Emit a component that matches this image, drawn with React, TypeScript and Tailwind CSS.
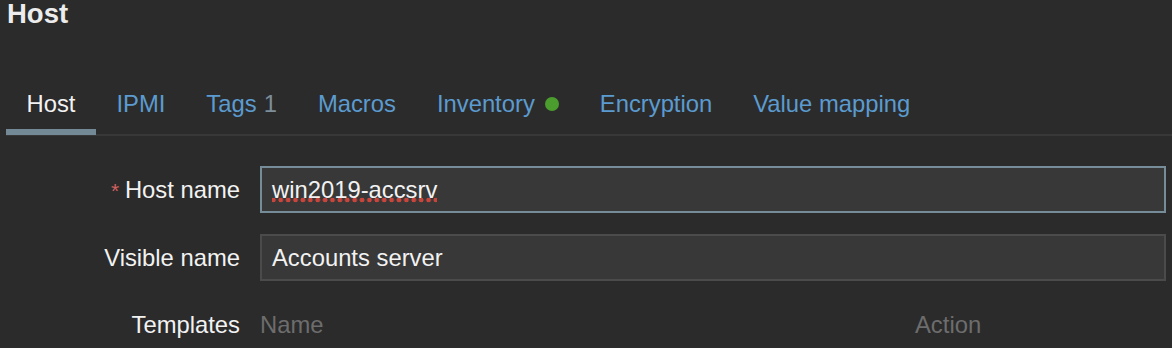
import React from "react";

const font = { fontFamily: '"Liberation Sans", Arial, Helvetica, sans-serif' };

const tabs = [
  { label: "Host", active: true },
  { label: "IPMI" },
  { label: "Tags", count: "1" },
  { label: "Macros" },
  { label: "Inventory", dot: true },
  { label: "Encryption" },
  { label: "Value mapping" },
];

function Field({ label, required, focused, value, spell }: { label: string; required?: boolean; focused?: boolean; value: string; spell?: boolean }) {
  return (
    <div className="flex items-center gap-[20px]">
      <div className="w-[240px] shrink-0 text-right text-[#f2f2f2]">
        {required && <span className="text-[#d25f5f] text-[21px]">* </span>}
        {label}
      </div>
      <div
        className={`flex h-[47px] flex-1 items-center border-2 bg-[#383838] px-[10px] text-[#f2f2f2] ${
          focused ? "border-[#768c99]" : "border-[#4b4b4b]"
        }`}
      >
        {spell ? (
          <span className="bg-[radial-gradient(circle,#c9453b_2.1px,transparent_2.6px)] bg-[length:7.4px_6px] bg-bottom bg-repeat-x">
            {value}
          </span>
        ) : (
          value
        )}
      </div>
    </div>
  );
}

export default function App() {
  return (
    <div className="min-h-[348px] w-full overflow-hidden bg-[#2b2b2b] text-[23.8px] leading-[27px]" style={font}>
      <h1 className="pl-[7px] pt-[1px] text-[27.5px] font-bold leading-[26px] text-[#ececec]">Host</h1>

      <ul className="mt-[63px] ml-[6px] flex border-b-2 border-[#383838]">
        {tabs.map((t) => (
          <li
            key={t.label}
            className={`-mb-[1px] flex items-center px-[20.5px] pb-[12px] ${
              t.active ? "border-b-[6px] border-[#738996] text-[#f2f2f2]" : "border-b-[6px] border-transparent text-[#5b9bd0]"
            }`}
          >
            {t.label}
            {t.count && <span className="ml-[7px] text-[#7d8e9b]">{t.count}</span>}
            {t.dot && <span className="ml-[10px] inline-block h-[14px] w-[14px] rounded-full bg-[#4b9d2e]" />}
          </li>
        ))}
      </ul>

      <div className="mt-[30px] flex flex-col gap-[21px] pr-[6px]">
        <Field label="Host name" required focused value="win2019-accsrv" spell />
        <Field label="Visible name" value="Accounts server" />
      </div>

      <div className="mt-[30px] flex gap-[20px]">
        <div className="w-[240px] shrink-0 text-right text-[#f2f2f2]">Templates</div>
        <div className="flex text-[#6d6d6d]">
          <div className="w-[655px]">Name</div>
          <div>Action</div>
        </div>
      </div>
    </div>
  );
}
